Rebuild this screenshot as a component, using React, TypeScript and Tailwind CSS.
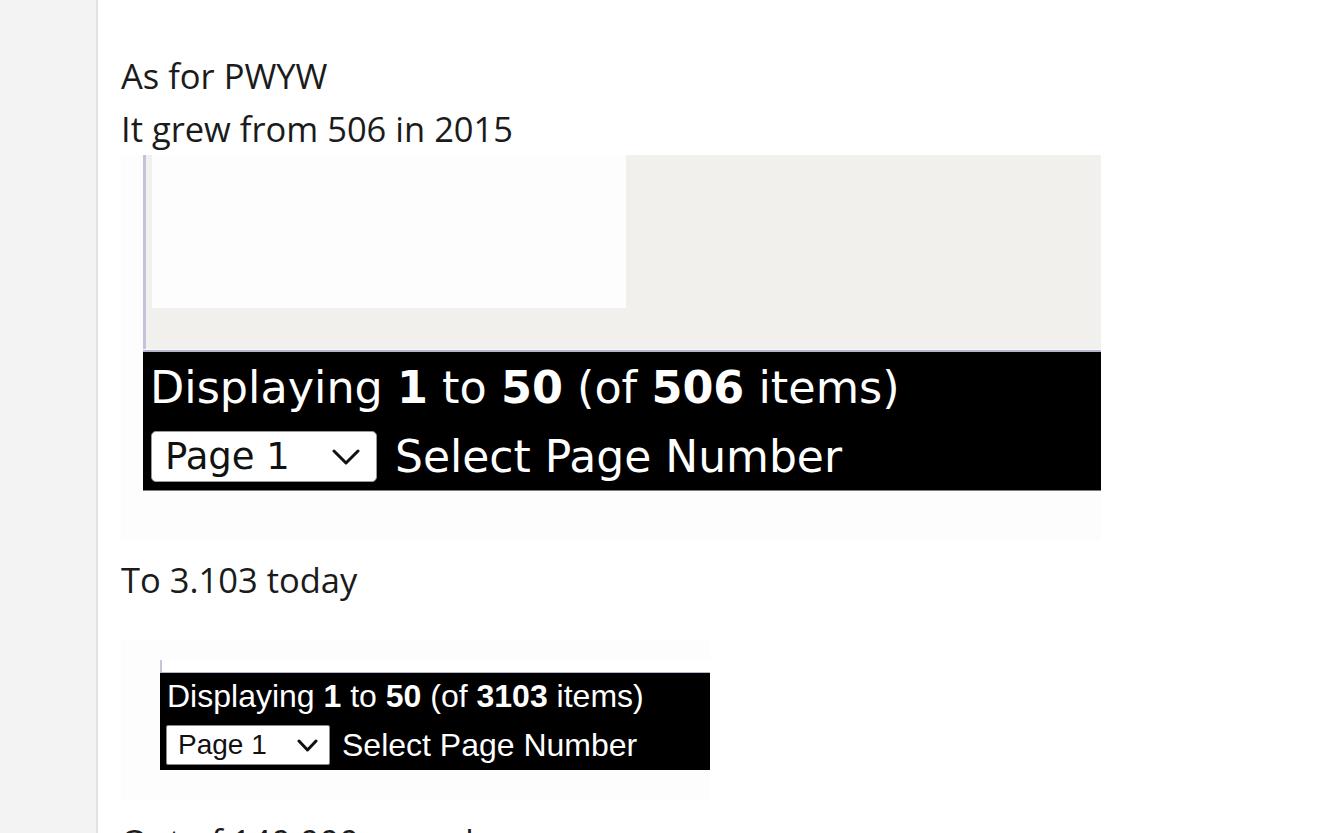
import React from "react";

function Chevron({ w, h, stroke }: { w: number; h: number; stroke: number }) {
  return (
    <svg width={w} height={h} viewBox={`0 0 ${w} ${h}`} fill="none">
      <polyline
        points={`${stroke / 2 + 0.5},${stroke / 2 + 0.5} ${w / 2},${h - stroke / 2 - 0.5} ${w - stroke / 2 - 0.5},${stroke / 2 + 0.5}`}
        stroke="#111"
        strokeWidth={stroke}
        strokeLinecap="round"
        strokeLinejoin="round"
      />
    </svg>
  );
}

export default function App() {
  return (
    <div className="flex h-[833px] overflow-hidden bg-white">
      <aside className="w-[98px] shrink-0 bg-[#f3f3f3] border-r-2 border-[#e1e1e1]" />
      <main className="flex-1 pl-[23px] pt-[49px] font-['Open_Sans','Noto_Sans',sans-serif] text-[34.5px] leading-[53px] text-[#1b1b1b]">
        <p>As for PWYW</p>
        <p>It grew from 506 in 2015</p>

        {/* Image 1 */}
        <div className="w-[980px] h-[385px] bg-[#fdfdfd] pl-[22px]">
          <div className="w-[958px] flex flex-col">
            <div className="h-[194px] flex border-l-[3px] border-[#c3c3d9] bg-[#f1f0ed] pl-[6px]">
              <div className="w-[474px] h-[153px] bg-[#fdfdfd]" />
            </div>
            <div className="h-[1px] bg-[#f9f9f9]" />
            <div className="h-[2px] bg-[#b5b5cc]" />
            <div className="h-[139px] bg-black border-b border-[#7d7d7d] pt-[10px] pl-[7px] font-['DejaVu_Sans',sans-serif] text-white">
              <div className="text-[44.5px] leading-[51px] whitespace-nowrap">
                Displaying <b>1</b> to <b>50</b> (of <b>506</b> items)
              </div>
              <div className="mt-[18px] flex items-center">
                <div className="ml-[1px] w-[226px] h-[51px] bg-white rounded-[5px] border border-[#9a9a9a] flex items-center justify-between pl-[13px] pr-[16px] text-[37px] leading-none text-[#111]">
                  <span>Page 1</span>
                  <Chevron w={28} h={16} stroke={3} />
                </div>
                <span className="ml-[18px] text-[44px] leading-[51px] whitespace-nowrap">Select Page Number</span>
              </div>
            </div>
          </div>
        </div>

        <p className="mt-[13px]">To 3.103 today</p>

        {/* Image 2 */}
        <div className="mt-[34px] w-[589px] h-[160px] bg-[#fdfdfd] pt-[20px] pl-[39px]">
          <div className="w-[550px] flex flex-col">
            <div className="h-[12px] border-l-2 border-[#c6c6da] bg-white" />
            <div className="h-[1px] bg-[#b5b5cc]" />
            <div className="h-[97px] bg-black pt-[5px] pl-[7px] font-['Liberation_Sans',Arial,sans-serif] text-white">
              <div className="text-[32px] leading-[36px] whitespace-nowrap">
                Displaying <b>1</b> to <b>50</b> (of <b>3103</b> items)
              </div>
              <div className="mt-[11px] flex items-center">
                <div className="-ml-[1px] w-[164px] h-[40px] bg-white rounded-[2px] border border-[#8a8a8a] flex items-center justify-between pl-[11px] pr-[11px] text-[28px] leading-none text-[#111]">
                  <span>Page 1</span>
                  <Chevron w={21} h={13} stroke={3} />
                </div>
                <span className="ml-[12px] text-[32px] leading-[36px] whitespace-nowrap">Select Page Number</span>
              </div>
            </div>
          </div>
        </div>

        <p className="mt-[15px]">Out of 140.000 records</p>
      </main>
    </div>
  );
}
